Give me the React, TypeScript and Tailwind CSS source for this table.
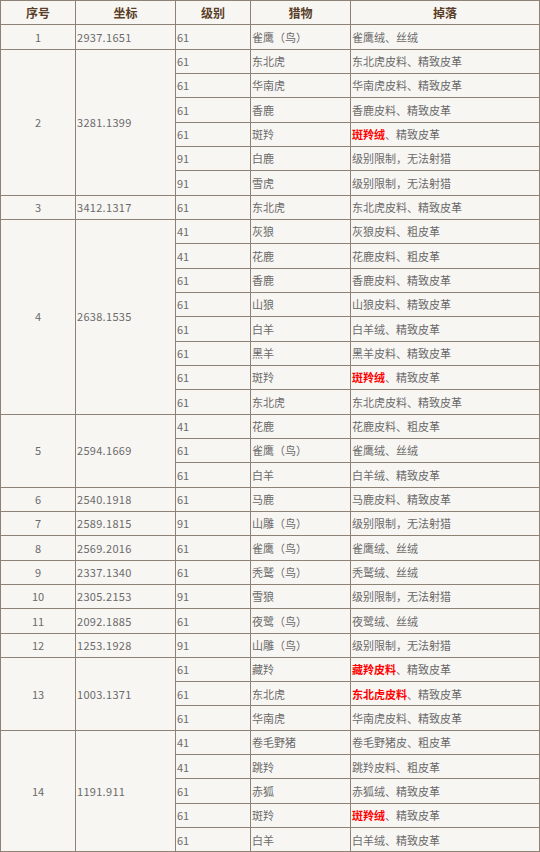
type Drop = { hot?: string; rest: string };
type Hunt = { lv: string; prey: string; drop: Drop };
type Spot = { no: number; pos: string; hunts: Hunt[]; dark?: "left" | "full" };

const lim: Drop = { rest: "级别限制，无法射猎" };
const d = (rest: string, hot?: string): Drop => ({ rest, hot });

const spots: Spot[] = [
  { no: 1, pos: "2937.1651", hunts: [{ lv: "61", prey: "雀鹰（鸟）", drop: d("雀鹰绒、丝绒") }] },
  {
    no: 2,
    pos: "3281.1399",
    hunts: [
      { lv: "61", prey: "东北虎", drop: d("东北虎皮料、精致皮革") },
      { lv: "61", prey: "华南虎", drop: d("华南虎皮料、精致皮革") },
      { lv: "61", prey: "香鹿", drop: d("香鹿皮料、精致皮革") },
      { lv: "61", prey: "斑羚", drop: d("、精致皮革", "斑羚绒") },
      { lv: "91", prey: "白鹿", drop: lim },
      { lv: "91", prey: "雪虎", drop: lim },
    ],
  },
  { no: 3, pos: "3412.1317", hunts: [{ lv: "61", prey: "东北虎", drop: d("东北虎皮料、精致皮革") }] },
  {
    no: 4,
    pos: "2638.1535",
    hunts: [
      { lv: "41", prey: "灰狼", drop: d("灰狼皮料、粗皮革") },
      { lv: "41", prey: "花鹿", drop: d("花鹿皮料、粗皮革") },
      { lv: "61", prey: "香鹿", drop: d("香鹿皮料、精致皮革") },
      { lv: "61", prey: "山狼", drop: d("山狼皮料、精致皮革") },
      { lv: "61", prey: "白羊", drop: d("白羊绒、精致皮革") },
      { lv: "61", prey: "黑羊", drop: d("黑羊皮料、精致皮革") },
      { lv: "61", prey: "斑羚", drop: d("、精致皮革", "斑羚绒") },
      { lv: "61", prey: "东北虎", drop: d("东北虎皮料、精致皮革") },
    ],
  },
  {
    no: 5,
    pos: "2594.1669",
    dark: "left",
    hunts: [
      { lv: "41", prey: "花鹿", drop: d("花鹿皮料、粗皮革") },
      { lv: "61", prey: "雀鹰（鸟）", drop: d("雀鹰绒、丝绒") },
      { lv: "61", prey: "白羊", drop: d("白羊绒、精致皮革") },
    ],
  },
  { no: 6, pos: "2540.1918", dark: "full", hunts: [{ lv: "61", prey: "马鹿", drop: d("马鹿皮料、精致皮革") }] },
  { no: 7, pos: "2589.1815", hunts: [{ lv: "91", prey: "山雕（鸟）", drop: lim }] },
  { no: 8, pos: "2569.2016", hunts: [{ lv: "61", prey: "雀鹰（鸟）", drop: d("雀鹰绒、丝绒") }] },
  { no: 9, pos: "2337.1340", hunts: [{ lv: "61", prey: "秃鹫（鸟）", drop: d("秃鹫绒、丝绒") }] },
  { no: 10, pos: "2305.2153", hunts: [{ lv: "91", prey: "雪狼", drop: lim }] },
  { no: 11, pos: "2092.1885", dark: "full", hunts: [{ lv: "61", prey: "夜鹭（鸟）", drop: d("夜鹭绒、丝绒") }] },
  { no: 12, pos: "1253.1928", hunts: [{ lv: "91", prey: "山雕（鸟）", drop: lim }] },
  {
    no: 13,
    pos: "1003.1371",
    hunts: [
      { lv: "61", prey: "藏羚", drop: d("、精致皮革", "藏羚皮料") },
      { lv: "61", prey: "东北虎", drop: d("、精致皮革", "东北虎皮料") },
      { lv: "61", prey: "华南虎", drop: d("华南虎皮料、精致皮革") },
    ],
  },
  {
    no: 14,
    pos: "1191.911",
    dark: "left",
    hunts: [
      { lv: "41", prey: "卷毛野猪", drop: d("卷毛野猪皮、粗皮革") },
      { lv: "41", prey: "跳羚", drop: d("跳羚皮料、粗皮革") },
      { lv: "61", prey: "赤狐", drop: d("赤狐绒、精致皮革") },
      { lv: "61", prey: "斑羚", drop: d("、精致皮革", "斑羚绒") },
      { lv: "61", prey: "白羊", drop: d("白羊绒、精致皮革") },
    ],
  },
];

// 普通格线偏浅，分组线更深
const cell = "border border-[#8e8175] px-px align-middle";

export default function App() {
  return (
    <div className="w-[540px] bg-white font-['Noto_Sans_CJK_SC','Noto_Sans',sans-serif] text-[11px] text-[#6a6a6a]">
      <table className="w-[540px] table-fixed border-collapse bg-[#f8f6f3]">
        <colgroup>
          <col className="w-[75px]" />
          <col className="w-[100px]" />
          <col className="w-[75px]" />
          <col className="w-[100px]" />
          <col />
        </colgroup>
        <thead>
          <tr className="h-[24.3px] text-[12px] font-bold text-[#5a3e28]">
            <th className={`${cell} text-center`}>序号</th>
            <th className={`${cell} text-center`}>坐标</th>
            <th className={`${cell} text-center`}>级别</th>
            <th className={`${cell} text-center`}>猎物</th>
            <th className={`${cell} text-center`}>掉落</th>
          </tr>
        </thead>
        <tbody>
          {spots.map((s) =>
            s.hunts.map((h, i) => {
              const top = i === 0 && s.dark;
              const leftTop = top ? "border-t-[#2f2a26]" : "";
              const rightTop = top === "full" ? "border-t-[#4a423b]" : "";
              return (
                <tr key={`${s.no}-${i}`} className="h-[24.34px]">
                  {i === 0 && (
                    <>
                      <td rowSpan={s.hunts.length} className={`${cell} ${leftTop} text-center`}>
                        {s.no}
                      </td>
                      <td rowSpan={s.hunts.length} className={`${cell} ${leftTop} tracking-[0.3px]`}>
                        {s.pos}
                      </td>
                    </>
                  )}
                  <td className={`${cell} ${rightTop}`}>{h.lv}</td>
                  <td className={`${cell} ${rightTop}`}>{h.prey}</td>
                  <td className={`${cell} ${rightTop} whitespace-nowrap`}>
                    {h.drop.hot && <span className="font-bold text-[#f00]">{h.drop.hot}</span>}
                    {h.drop.rest}
                  </td>
                </tr>
              );
            })
          )}
        </tbody>
      </table>
    </div>
  );
}
